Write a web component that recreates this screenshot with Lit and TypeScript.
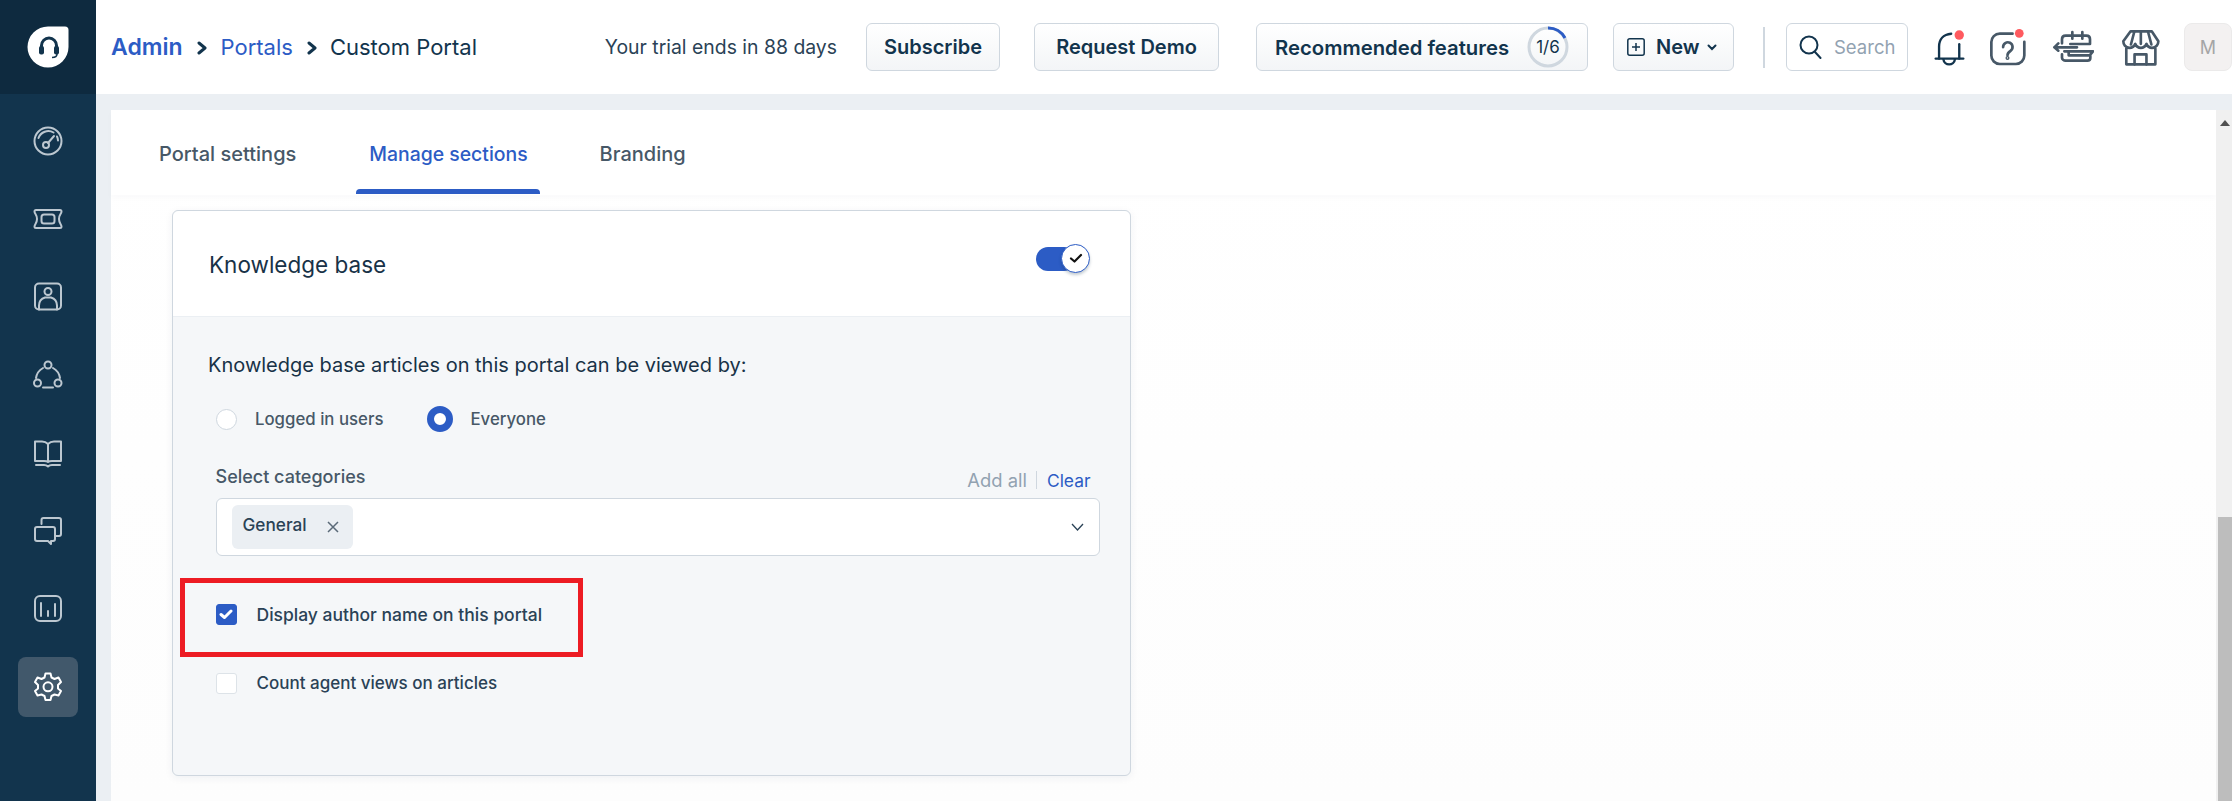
import { LitElement, html, css, svg } from "lit";
import { customElement } from "lit/decorators.js";

const navIcons = [
  svg`<circle cx="15" cy="15" r="13.5"/><path d="M5.5 12a10.5 10.5 0 0 1 15-5.5"/><path d="M24 10.5a10 10 0 0 1 1 4"/><circle cx="13" cy="19" r="3"/><path d="M15 17l6-7"/>`,
  svg`<path d="M3 6h24c1 0 1.500.5 1.500 1.500 0 2.500-2.500 3-2.500 7.500s2.500 5 2.500 7.500c0 1-.5 1.500-1.500 1.500H3c-1 0-1.500-.5-1.500-1.500 0-2.500 2.500-3 2.500-7.500S1.500 10 1.500 7.500C1.500 6.500 2 6 3 6z"/><rect x="8.500" y="10.500" width="13" height="9" rx="2.500"/>`,
  svg`<rect x="2" y="1.500" width="26" height="26" rx="4"/><circle cx="15" cy="9.500" r="3.500"/><path d="M6 27.500v-4a8.500 8.500 0 0 1 6-8h6a8.500 8.500 0 0 1 6 8v4"/>`,
  svg`<circle cx="15" cy="5" r="3.500"/><circle cx="4.500" cy="23" r="3.500"/><circle cx="25" cy="23" r="3.500"/><path d="M10 8a14 14 0 0 0-7 10"/><path d="M20 8a14 14 0 0 1 7 10"/><path d="M10 27.500h10"/>`,
  svg`<path d="M15 6v17"/><path d="M15 6c-2-2-4-2.500-6-2.500H2v19.500h9c2 0 3 0 4 1 1-1 2-1 4-1h9V3.500h-7c-2 0-4 .5-6 2.500z"/><path d="M3 27h8c2 0 3 .5 4 1.500 1-1 2-1.500 4-1.500h8"/>`,
  svg`<path d="M8.500 8V4a2 2 0 0 1 2-2H26a2 2 0 0 1 2 2v14a2 2 0 0 1-2 2h-3"/><path d="M4 11h16a2 2 0 0 1 2 2v10a2 2 0 0 1-2 2h-2v3l-3-3H4a2 2 0 0 1-2-2V13a2 2 0 0 1 2-2z"/>`,
  svg`<rect x="2" y="2" width="26" height="25" rx="5"/><path d="M8 9v13M15 17v5M22 10v12"/>`,
  svg`<path d="M12.500 1.500h5l1 4 3 1.500 4-1.500 2.500 4.500-3 3v3.500l3 2.500-2.500 4.500-4-1-3 1.500-1 4h-5l-1-4-3-1.500-4 1L2 19l3-2.500V13l-3-3 2.500-4.500 4 1.500 3-1.500z"/><circle cx="15" cy="14.800" r="4.500"/>`,
];

@customElement("app-root")
export class AppRoot extends LitElement {
  static styles = css`
    :host { display: block; width: 2232px; height: 801px; overflow: hidden; font-family: Inter, "Liberation Sans", sans-serif; color: #12344d; }
    * { box-sizing: border-box; }
    svg { display: block; flex: none; }
    .app { display: flex; height: 801px; }
    .side { width: 96px; flex: none; background: #12344d; display: flex; flex-direction: column; align-items: center; }
    .logo { width: 96px; height: 94px; background: #0e2a3f; display: flex; align-items: center; justify-content: center; }
    .nav { display: flex; flex-direction: column; gap: 18px; margin-top: 17px; }
    .nav-item { width: 60px; height: 60px; border-radius: 8px; display: flex; align-items: center; justify-content: center; }
    .nav-item svg { fill: none; stroke: #bcc7d0; stroke-width: 2; stroke-linecap: round; stroke-linejoin: round; }
    .nav-item.active { background: #41586b; }
    .nav-item.active svg { stroke: #fff; }

    .main { flex: 1; min-width: 0; display: flex; flex-direction: column; }
    .top { height: 94px; flex: none; background: #fff; display: flex; align-items: center; padding-left: 15px; }
    .crumbs { display: flex; align-items: center; font-size: 22px; white-space: nowrap; }
    .crumbs a { color: #2c5cc5; }
    .crumbs .admin { font-weight: 600; font-size: 23px; }
    .crumbs svg { margin: 2px 14px 0 14px; fill: none; stroke: #12344d; stroke-width: 3; stroke-linecap: round; stroke-linejoin: round; }
    .crumbs svg.second { margin: 2px 13px 0 14px; }
    .actions { margin-left: auto; display: flex; align-items: center; }
    .trial { font-size: 19.400px; margin-right: 29px; color: #2a4256; white-space: nowrap; }
    .btn { height: 48px; border: 1.500px solid #cfd7df; border-radius: 6px; background: linear-gradient(#fff, #f3f5f7); display: flex; align-items: center; justify-content: center; font-size: 20px; font-weight: 600; white-space: nowrap; }
    .b-sub { width: 134px; }
    .b-demo { width: 185px; margin-left: 34px; }
    .b-rec { width: 332px; margin-left: 37px; justify-content: flex-start; padding-left: 18px; font-size: 20.300px; }
    .b-new { width: 121px; margin-left: 25px; justify-content: flex-start; padding-left: 13px; }
    .ring { margin-left: auto; margin-right: 18px; position: relative; width: 42px; height: 42px; font-size: 17px; font-weight: 400; display: flex; align-items: center; justify-content: center; }
    .ring svg { position: absolute; inset: 0; fill: none; }
    .b-new span { margin: 0 7px 0 11px; font-size: 20px; }
    .divider { width: 2px; height: 41px; background: #cfd7df; margin: 0 21px 0 29px; }
    .search { width: 122px; height: 48px; border: 1.500px solid #cfd7df; border-radius: 6px; display: flex; align-items: center; padding-left: 12px; gap: 12px; color: #92a2b1; font-size: 18.500px; }
    .ic { fill: none; stroke-width: 7; stroke-linecap: round; stroke-linejoin: round; }
    .ic.dark { stroke: #12344d; }
    .ic.gray { stroke: #475867; stroke-width: 8; }
    .dot { fill: #ff5a5f; stroke: none; }
    .i-bell { margin-left: 26px; }
    .i-help { margin-left: 23px; }
    .i-cal { margin-left: 26px; }
    .i-store { margin-left: 28px; }
    .avatar { width: 48px; height: 48px; margin-left: 24px; border-radius: 8px; background: #f3f1f1; border: 1.500px solid #ebeaea; color: #a5a5a5; font-size: 18px; display: flex; align-items: center; justify-content: center; }

    .body { flex: 1; min-height: 0; background: #ebeff3; padding: 16px 0 0 15px; display: flex; }
    .panel { flex: 1; min-width: 0; background: linear-gradient(#fff, #fdfdfd); display: flex; flex-direction: column; }
    .tabs { height: 85px; flex: none; display: flex; gap: 47px; padding-left: 35px; background: #fff; box-shadow: 0 3px 6px rgba(18, 52, 77, 0.025); font-size: 20px; font-weight: 500; color: #475867; }
    .tab { padding: 0 13px; display: flex; align-items: center; position: relative; white-space: nowrap; padding-top: 3px; }
    .tab.on { color: #2c5cc5; font-size: 19.400px; padding: 3px 12px 0 13px; }
    .tab.on::after { content: ""; position: absolute; left: 0; right: 0; bottom: 1px; height: 5px; background: #2c5cc5; border-radius: 4px 4px 0 0; }
    .scroll { width: 16px; flex: none; background: #f0f0f0; padding-top: 10px; display: flex; flex-direction: column; align-items: flex-end; }
    .arrow { width: 14px; display: flex; justify-content: center; margin-bottom: 391px; }
    .arrow i { width: 0; height: 0; border: 5px solid transparent; border-top: 0; border-bottom: 6px solid #505050; }
    .thumb { width: 14px; flex: 1; background: #bdbdbd; }

    .card { position: relative; margin: 15px 0 0 61px; width: 959px; height: 566px; border: 1.500px solid #cfd7df; border-radius: 6px; background: #f5f7f9; box-shadow: 0 2px 8px rgba(18, 52, 77, 0.06); }
    .card-head { height: 106px; background: #fff; border-bottom: 1px solid #ebeff3; border-radius: 6px 6px 0 0; display: flex; align-items: center; padding: 2px 40px 0 36px; font-size: 22.500px; font-weight: 400; color: #183247; justify-content: space-between; }
    .switch { width: 54px; height: 29px; position: relative; margin-top: -12px; }
    .switch .track { position: absolute; left: 0; top: 3px; width: 40px; height: 24px; border-radius: 12px; background: #2c5cc5; }
    .switch .knob { position: absolute; right: 0; top: 0; width: 29px; height: 29px; border-radius: 50%; background: #fff; border: 1.500px solid #2c5cc5; box-shadow: 0 2px 3px rgba(18, 52, 77, .25); display: flex; align-items: center; justify-content: center; }
    .card-body { padding: 34px 30.500px 0 35px; }
    .lead { font-size: 20px; line-height: 28px; font-weight: 400; color: #183247; }
    .radios { display: flex; align-items: center; height: 30px; margin: 25px 0 0 8px; font-size: 16.800px; font-weight: 500; color: #475867; }
    .radio { width: 21px; height: 21px; border-radius: 50%; background: #fff; border: 1px solid #cfd7df; margin-right: 18px; }
    .radio.on { width: 26px; height: 26px; border: 7px solid #2c5cc5; margin: 0 17px 0 44px; }
    .inner { margin-left: 7.500px; }
    .label-row { display: flex; justify-content: space-between; align-items: flex-end; margin-top: 15px; height: 38px; font-size: 18px; font-weight: 500; color: #475867; }
    .links { display: flex; align-items: center; font-weight: 400; font-size: 18.400px; padding-right: 9px; color: #92a2b1; margin-bottom: -4px; }
    .links i { width: 1px; height: 18px; background: #cfd7df; margin: 0 10px 0 9px; }
    .links a { color: #2c5cc5; font-size: 17.400px; }
    .select { margin-top: 11px; height: 58px; background: #fff; border: 1.500px solid #cfd7df; border-radius: 6px; display: flex; align-items: center; padding: 0 15px; justify-content: space-between; }
    .tag { width: 121px; height: 44px; background: #ebeff3; border-radius: 6px; display: flex; align-items: center; padding-left: 11px; font-size: 17.200px; font-weight: 500; color: #2a4256; gap: 20px; }
    .tag span { margin-top: -5px; }
    .check { display: flex; align-items: center; font-weight: 500; color: #2a4256; height: 30px; }
    .box { width: 21px; height: 21px; border-radius: 3px; margin-right: 20px; background: #fff; border: 1px solid #dde3e8; display: flex; align-items: center; justify-content: center; }
    .box.on { background: #2c5cc5; border-color: #2c5cc5; }
    .c1 { margin-top: 43px; font-size: 17.500px; }
    .c2 { margin-top: 39px; font-size: 17px; }
    .hl { position: absolute; left: 7px; top: 366.500px; width: 403px; height: 79px; border: 5px solid #ed1c24; pointer-events: none; }
  `;

  render() {
    return html`
      <div class="app">
        <aside class="side">
          <div class="logo">
            <svg width="42" height="42" viewBox="0 0 42 42">
              <path d="M21 .5H38a3.500 3.500 0 0 1 3.500 3.500V21A20.500 20.500 0 1 1 21 .5z" fill="#fff" />
              <path d="M14.500 25v-5.500a7.500 7.500 0 0 1 15 0V25" fill="none" stroke="#12344d" stroke-width="3" />
              <rect x="12" y="20" width="5" height="8.500" rx="2" fill="#12344d" />
              <rect x="27" y="20" width="5" height="8.500" rx="2" fill="#12344d" />
              <path d="M30 28c0 2.500-1.500 3.500-5 3.500" fill="none" stroke="#12344d" stroke-width="1.500" />
            </svg>
          </div>
          <nav class="nav">
            ${navIcons.map(
              (p, i) => html`<div class="nav-item ${i === 7 ? "active" : ""}"><svg width="30" height="30" viewBox="0 0 30 30">${p}</svg></div>`
            )}
          </nav>
        </aside>
        <div class="main">
          <header class="top">
            <div class="crumbs">
              <a class="admin">Admin</a>
              <svg width="10" height="14" viewBox="0 0 10 14"><path d="M2 2l6 5-6 5" /></svg>
              <a>Portals</a>
              <svg class="second" width="10" height="14" viewBox="0 0 10 14"><path d="M2 2l6 5-6 5" /></svg>
              <span>Custom Portal</span>
            </div>
            <div class="actions">
              <span class="trial">Your trial ends in 88 days</span>
              <div class="btn b-sub">Subscribe</div>
              <div class="btn b-demo">Request Demo</div>
              <div class="btn b-rec">
                Recommended features
                <div class="ring">
                  <svg width="42" height="42" viewBox="0 0 42 42">
                    <circle cx="21" cy="21" r="19" stroke="#cfd7df" stroke-width="3" />
                    <path d="M21 2a19 19 0 0 1 17 10" stroke="#2c5cc5" stroke-width="3" />
                  </svg>
                  1/6
                </div>
              </div>
              <div class="btn b-new">
                <svg width="18" height="18" viewBox="0 0 18 18" fill="none" stroke="#12344d" stroke-width="1.500">
                  <rect x=".8" y=".8" width="16.400" height="16.400" rx="2" /><path d="M9 5v8M5 9h8" />
                </svg>
                <span>New</span>
                <svg width="10" height="7" viewBox="0 0 10 7" fill="none" stroke="#12344d" stroke-width="2" stroke-linecap="round"><path d="M1.500 1.500L5 5l3.500-3.500" /></svg>
              </div>
              <div class="divider"></div>
              <div class="search">
                <svg width="23" height="24" viewBox="0 0 23 24" fill="none" stroke="#12344d" stroke-width="2" stroke-linecap="round">
                  <circle cx="10" cy="10" r="8.500" /><path d="M16 17l5.500 6" />
                </svg>
                Search
              </div>
              <svg class="ic dark i-bell" width="32" height="37" viewBox="40 30 95 110">
                <path d="M55 118V82c0-20 12-36 36-38" /><path d="M115 75v43" /><path d="M45 118h82" /><path d="M68 120c2 20 32 20 34 0" />
                <circle class="dot" cx="115" cy="48" r="14" />
              </svg>
              <svg class="ic gray i-help" width="37" height="37" viewBox="205 30 110 110">
                <path d="M275 44h-38c-14 0-25 11-25 25v40c0 14 11 25 25 25h48c14 0 25-11 25-25V68" />
                <path d="M247 84a14 14 0 1 1 22 11c-6 4-9 6-9 13" /><circle cx="260" cy="116" r="2" />
                <circle class="dot" cx="295" cy="43" r="13" />
              </svg>
              <svg class="ic gray i-cal" width="42" height="34" viewBox="395 38 126 102">
                <path d="M425 78v-12c0-7 5-11 11-11h62c7 0 11 4 11 11v14H450" /><path d="M456 44v20M486 44v20" />
                <path d="M402 90h68M414 78l-12 12 12 10" /><path d="M432 102H518l-8 10v10c0 5-4 8-9 8h-65c-6 0-11-4-11-9v-10" /><path d="M445 102v12h62" />
              </svg>
              <svg class="ic gray i-store" width="38" height="37" viewBox="605 33 115 112">
                <path d="M631 40h64l20 30c0 9-6 20-19 20-8 0-14-5-17-12-3 7-9 12-17 12s-14-5-17-12c-3 7-9 12-17 12-13 0-19-11-19-20z" />
                <path d="M642 42l-10 38M684 42l10 38M662 42v36" /><path d="M618 92v48h88V92" /><path d="M643 140v-30h36v30" />
              </svg>
              <div class="avatar">M</div>
            </div>
          </header>
          <div class="body">
            <div class="panel">
              <div class="tabs">
                <div class="tab">Portal settings</div>
                <div class="tab on">Manage sections</div>
                <div class="tab">Branding</div>
              </div>
              <section class="card">
                <div class="card-head">
                  Knowledge base
                  <div class="switch">
                    <div class="track"></div>
                    <div class="knob">
                      <svg width="14" height="11" viewBox="0 0 14 11" fill="none" stroke="#111" stroke-width="2.200" stroke-linecap="round" stroke-linejoin="round"><path d="M2 5.500l3.500 3L12 2" /></svg>
                    </div>
                  </div>
                </div>
                <div class="card-body">
                  <div class="lead">Knowledge base articles on this portal can be viewed by:</div>
                  <div class="radios">
                    <div class="radio"></div>
                    Logged in users
                    <div class="radio on"></div>
                    Everyone
                  </div>
                  <div class="inner">
                    <div class="label-row">
                      <span>Select categories</span>
                      <div class="links"><span>Add all</span><i></i><a>Clear</a></div>
                    </div>
                    <div class="select">
                      <div class="tag">
                        <span>General</span>
                        <svg width="12" height="12" viewBox="0 0 12 12" fill="none" stroke="#5a6a78" stroke-width="1.500"><path d="M1 1l10 10M11 1L1 11" /></svg>
                      </div>
                      <svg width="13" height="8" viewBox="0 0 13 8" fill="none" stroke="#2a4256" stroke-width="1.300"><path d="M1 1l5.500 6L12 1" /></svg>
                    </div>
                    <div class="check c1">
                      <div class="box on">
                        <svg width="14" height="11" viewBox="0 0 14 11" fill="none" stroke="#fff" stroke-width="3" stroke-linecap="round" stroke-linejoin="round"><path d="M2 5.500l3.500 3L12 2" /></svg>
                      </div>
                      Display author name on this portal
                    </div>
                    <div class="check c2"><div class="box"></div>Count agent views on articles</div>
                  </div>
                </div>
                <div class="hl"></div>
              </section>
            </div>
            <div class="scroll">
              <div class="arrow"><i></i></div>
              <div class="thumb"></div>
            </div>
          </div>
        </div>
      </div>
    `;
  }
}
